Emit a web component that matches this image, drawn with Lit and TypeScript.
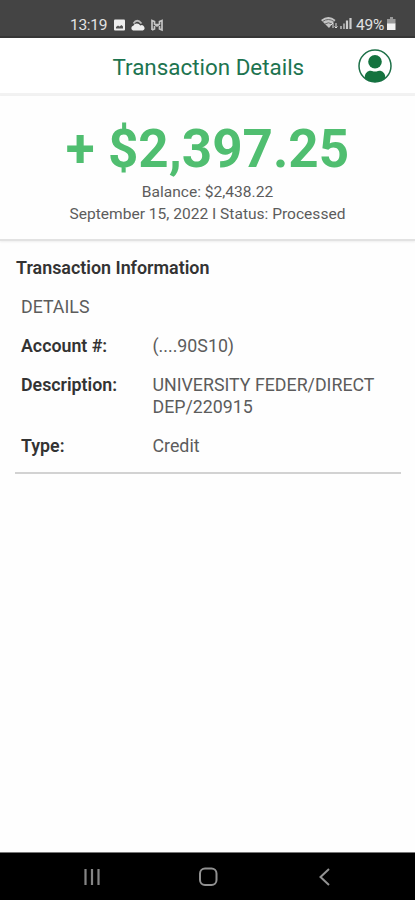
import { LitElement, html, css } from "lit";
import { customElement } from "lit/decorators.js";

@customElement("app-root")
export class AppRoot extends LitElement {
  static styles = css`
    :host { display: flex; flex-direction: column; height: 900px; width: 415px; overflow: hidden; background: #fefefe; font-family: Roboto, sans-serif; color: #5c5c5c; }
    * { box-sizing: border-box; }
    svg { display: block; flex: none; }
    .status { height: 38px; flex: none; background: #444; border-bottom: 2px solid #363636; display: flex; align-items: flex-start; padding: 15px 19px 0 70px; color: #e2e2e2; font-size: 15.5px; line-height: 20px; }
    .clock { width: 43px; white-space: nowrap; letter-spacing: -.3px; }
    .left { margin-top: 3px; }
    .right { margin: 1px 3px 0 auto; }
    .pct { width: 30px; white-space: nowrap; letter-spacing: -.2px; }
    .batt { margin: 2px 0 0 1px; }
    .head { height: 58px; flex: none; display: grid; grid-template-columns: 112.5px 1fr 57px; align-items: center; border-bottom: 3px solid #f2f2f2; background: #fff; }
    .title { grid-column: 2; color: #1d7450; font-size: 22.4px; line-height: 28px; white-space: nowrap; padding-top: 2px; }
    .summary { height: 145px; flex: none; padding-top: 22px; border-bottom: 2px solid #e2e2e2; box-shadow: 0 1px 2px #eee; display: flex; flex-direction: column; align-items: center; font-size: 15.55px; line-height: 21.5px; white-space: nowrap; }
    .amount { color: #50be70; font-weight: 700; font-size: 53px; line-height: 62px; margin-bottom: 2px; }
    .section { padding: 16px 14px 0 15px; font-size: 17.8px; line-height: 21.5px; }
    h2 { margin: 0 0 0 1px; color: #333; font-size: 17.9px; line-height: 22px; font-weight: 600; }
    .rows { border-bottom: 2px solid #d2d2d2; padding: 17px 6px 15px; display: flex; flex-direction: column; gap: 17.7px; }
    .row { display: grid; grid-template-columns: 131.5px 1fr; white-space: nowrap; }
    .row b { color: #333; font-weight: 600; }
    .nav { margin-top: auto; height: 48px; flex: none; background: #000; border-top: 1px solid #777; display: grid; grid-template-columns: 83px 116px 116px; }
    .nav svg { justify-self: end; margin: 11px -22px 0 0; }
  `;
  render() {
    return html`
      <div class="status">
        <span class="clock">13:19</span>
        <svg class="left" width="52" height="14" viewBox="0 0 52 14">
          <rect x="1" y="1.500" width="11" height="11" rx="1" fill="#eee"/>
          <path d="M3 10.500V9l2-1.500 1.500 1L8.500 7 10 8.500v2z" fill="#555"/>
          <path d="M20 12.500a2.500 2.500 0 0 1 .3-4.800 4 4 0 0 1 7-.3 2.700 2.700 0 0 1 2.600 5.100z" fill="#eee"/>
          <path d="M20.500 5.500Q24 0 28.500 5.500" fill="none" stroke="#bbb" stroke-width="1.800"/>
          <path d="M39 12V2.500l2.500 1V6L44 8l2.500-2V3.500l2.500-1V12l-2.500-1V8M41.500 8v3L39 12M42 6.500h4" fill="none" stroke="#c4c4c4" stroke-width="1.700"/>
        </svg>
        <svg class="right" width="32" height="16" viewBox="0 0 32 16">
          <path d="M0 4Q7.500-2 14.500 4L8 12z" fill="#c4c4c4"/>
          <path d="M1.500 5.500Q7.500 1.500 13 5.500M4 8Q7.500 5.500 11 8" fill="none" stroke="#666"/>
          <path d="M12 12V7m-2 2L12 7M15 7v5m-1.500-1.500L15 12l1.500-1.500" stroke="#ddd" fill="none"/>
          <path d="M20 13v-3M23 13V7.500" stroke="#aaa" stroke-width="1.800"/>
          <path d="M26 13V4.500M29.500 13V2" stroke="#ccc" stroke-width="2.200"/>
        </svg>
        <span class="pct">49%</span>
        <svg class="batt" width="9" height="14" viewBox="0 0 9 14">
          <path d="M3 0h3v2h2.500v5H0V2h3z" fill="#999"/><path d="M0 6.500h8.500V13H0z" fill="#f2f2f2"/>
        </svg>
      </div>
      <header class="head">
        <div class="title">Transaction Details</div>
        <svg width="34" height="34" viewBox="0 0 34 34">
          <defs><clipPath id="c"><circle cx="17" cy="17" r="16"/></clipPath></defs>
          <circle cx="17" cy="17" r="16" fill="#fff" stroke="#1d7048" stroke-width="1.500"/>
          <circle cx="17" cy="12.800" r="6.800" fill="#14733f"/>
          <path d="M6.500 34v-5q0-5.500 5-7.200 1.500-.3 2.500.2 3 1.200 6 0 1-.5 2.500-.2 5 1.700 5 7.200v5z" fill="#14733f" clip-path="url(#c)"/>
        </svg>
      </header>
      <section class="summary">
        <div class="amount">+ $2,397.25</div>
        <div class="bal">Balance: $2,438.22</div>
        <div class="date">September 15, 2022 I Status: Processed</div>
      </section>
      <section class="section">
        <h2>Transaction Information</h2>
        <div class="rows">
          <div>DETAILS</div>
          <div class="row"><b>Account #:</b><span>(....90S10)</span></div>
          <div class="row"><b>Description:</b><span>UNIVERSITY FEDER/DIRECT<br>DEP/220915</span></div>
          <div class="row"><b>Type:</b><span>Credit</span></div>
        </div>
      </section>
      <nav class="nav">
        <svg width="26" height="26" viewBox="0 0 26 26"><path d="M6.500 5v16M13 5v16M19.500 5v16" stroke="#858585" stroke-width="2.200"/></svg>
        <svg width="26" height="26" viewBox="0 0 26 26"><rect x="5" y="4.500" width="16.500" height="16.500" rx="5" fill="none" stroke="#919191" stroke-width="2"/></svg>
        <svg width="26" height="26" viewBox="0 0 26 26"><path d="M18 5l-8.500 8 8.500 8" fill="none" stroke="#929292" stroke-width="2"/></svg>
      </nav>`;
  }
}
